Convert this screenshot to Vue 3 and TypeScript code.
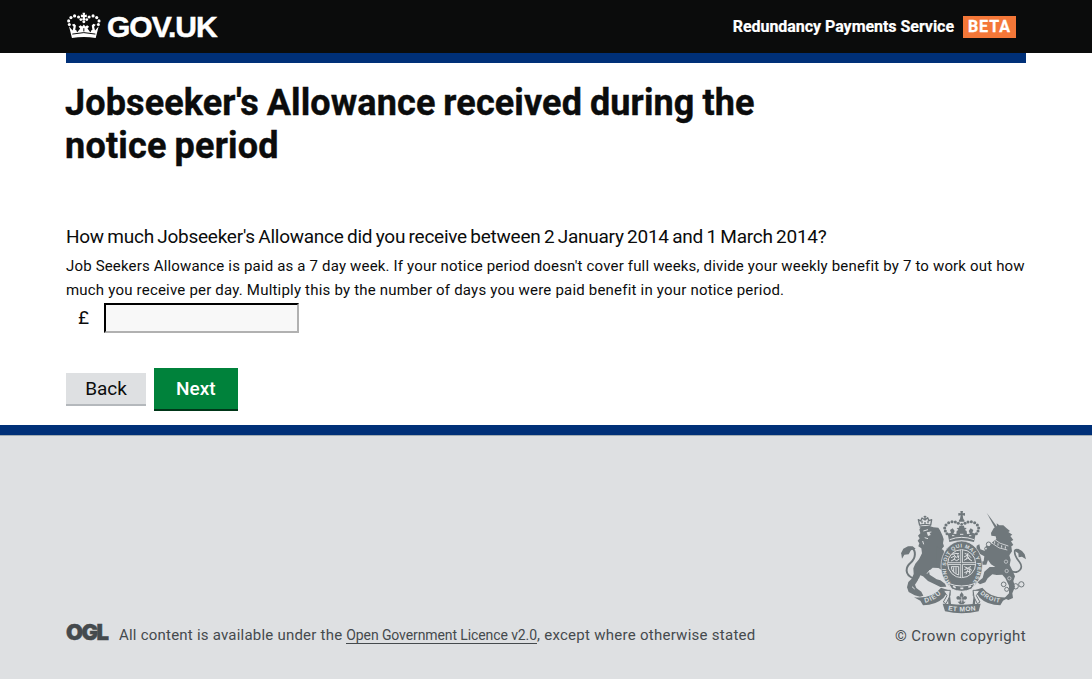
<script setup lang="ts">
import { ref } from 'vue'

const amount = ref<string>('')
const pearls: Array<[number, number, number]> = [
  [20, 49, 4.6], [18, 38, 4.6], [25, 28, 4.8], [36, 23, 4.8], [48, 26, 4.6], [55, 34, 4.2],
  [108, 49, 4.6], [110, 38, 4.6], [103, 28, 4.8], [92, 23, 4.8], [80, 26, 4.6], [73, 34, 4.2],
]
const arch: Array<[number, number]> = [
  [171, 101], [166, 93], [164, 84], [168, 75], [176, 68], [186, 65], [196, 66], [205, 70],
  [259, 101], [264, 93], [266, 84], [262, 75], [254, 68], [244, 65], [234, 66], [225, 70],
]
</script>

<template>
  <div class="page">
    <header class="top">
      <div class="wrap top-row">
        <a class="brand">
          <svg class="crown" viewBox="13 12 103 80" aria-hidden="true">
            <g fill="#fff">
              <circle v-for="(p, i) in pearls" :key="i" :cx="p[0]" :cy="p[1]" :r="p[2]" />
              <path d="M60 13h8l-1 7 6-1v8l-6-1 2 9q-5 4-10 0l2-9-6 1v-8l6 1z" />
              <circle cx="64" cy="41" r="4.5" />
              <path d="M19 54l11 13 3-11-5-6 7-3 5 5-2 13 8 5 7-9-5-5 6-5 5 4 5-6 5 6 5-4 6 5-5 5 7 9 8-5-2-13 5-5 7 3-5 6 3 11 11-13-9 36q-35-7-72 0z" />
            </g>
            <path d="M29 78q35-9 70 0M44 72l1-8M64 70v-10M84 72l-1-8" fill="none" stroke="#0b0c0c" stroke-width="3" />
          </svg>
          <span class="gov">GOV.UK</span>
        </a>
        <div class="service"><span class="service-name">Redundancy Payments Service</span><span class="beta">BETA</span></div>
      </div>
    </header>
    <main class="wrap main">
      <h1><span class="h-one">Jobseeker's Allowance received during the</span><br /><span class="h-two">notice period</span></h1>
      <form @submit.prevent>
        <label class="question" for="amount">How much Jobseeker's Allowance did you receive between 2 January 2014 and 1 March 2014?</label>
        <p class="hint"><span class="hint-one">Job Seekers Allowance is paid as a 7 day week. If your notice period doesn't cover full weeks, divide your weekly benefit by 7 to work out how</span><br /><span class="hint-two">much you receive per day. Multiply this by the number of days you were paid benefit in your notice period.</span></p>
        <div class="money"><span class="pound">£</span><input id="amount" v-model="amount" type="text" /></div>
        <div class="actions">
          <button class="back" type="button">Back</button>
          <button class="next" type="submit">Next</button>
        </div>
      </form>
    </main>
    <footer class="footer">
      <div class="wrap foot-row">
        <div class="licence">
          <span class="ogl">OGL</span>
          <p><span class="lic-a">All content is available under the </span><a>Open Government Licence v2.0</a><span class="lic-b">, except where otherwise stated</span></p>
        </div>
        <div class="copyright">
          <svg class="arms" viewBox="30 30 381 315" aria-hidden="true">
            <defs>
              <path id="motto" d="M182 247A47 61 0 1 1 248 247" />
              <path id="dieu" d="M105 308Q134 303 158 277" />
              <path id="mon" d="M174 331Q215 338 262 330" />
              <path id="droit" d="M270 280Q294 306 340 309" />
            </defs>
            <!-- lion -->
            <g fill="#6f777b" stroke="#6f777b" stroke-linejoin="round">
              <path stroke="none" d="M88 88L94 80 118 78 130 82 145 83 150 91 154 99 158 108 161 118 159 130 162 139 156 146 151 153 147 169 142 188 158 183 162 194 146 204 128 203 117 213 119 224 140 238 151 241 165 251 169 260 151 261 133 252 114 243 99 229 91 226 86 237 75 254 79 264 94 275 100 287 90 290 74 286 56 276 51 262 55 246 65 236 71 222 70 205 76 191 87 178 96 160 94 145 85 139 88 130 83 122 89 115 84 107 91 100z" />
              <path stroke="none" d="M140 140L160 150 166 165 160 182 164 205 158 212 140 200z" />
              <path fill="none" stroke-width="6" d="M70 235C43 224 46 201 62 188C79 174 77 151 67 145C54 139 46 151 43 160" />
              <path stroke="none" d="M33 160l7-14 14-7 14 0 9 7-14 5-7 12-13 1-7 12-2-13z" />
              <path fill="none" stroke-width="4" d="M89 76l-4-17 7 4 4-9 9 6 8-7 4 9 8-3-3 17M88 76q17-6 35 0M105 47v14M101 50h8M89 81l32-1M96 70v-8M114 70v-8M105 72v-6" />
            </g>
            <path d="M100 93l14-4M112 98l12-2M104 113l10 3M98 123l3 10M120 210l-9 11M83 251l4-15M66 260l8 7" fill="none" stroke="#dee0e2" stroke-width="3" />
            <path d="M110 97l8 0 4 8-8 3z" fill="#dee0e2" />
            <!-- unicorn -->
            <g fill="#6f777b">
              <path d="M290 38l30 41-5 5z" />
              <path d="M304 107L303 99 311 85 321 77 320 70 328 76 340 76 349 84 360 93 355 96 367 104 361 108 370 120 363 124 370 135 364 139 366 154 358 166 362 180 359 195 368 213 375 229 370 243 375 260 367 280 369 294 355 300 343 295 357 280 357 257 346 235 337 224 320 225 307 223 293 235 286 247 270 253 262 247 278 234 283 215 299 201 316 201 303 193 294 180 289 194 276 194 270 185 281 184 283 169 269 161 259 150 260 137 268 133 271 148 283 152 291 147 287 138 299 139 307 127 319 117 317 109z" />
              <path fill="none" stroke="#6f777b" stroke-width="5" d="M363 213C385 224 402 205 389 187C377 172 371 161 375 151Q384 143 399 165" />
              <path d="M371 151l13-5 12 7 8 10 4 15-12-8-10 2-1-12z" />
            </g>
            <path d="M304 128q22 20 48 22M309 115q20 18 46 23" fill="none" stroke="#dee0e2" stroke-width="2.5" />
            <path d="M314 124v7M324 130v7M335 136v7M346 139v7" fill="none" stroke="#dee0e2" stroke-width="3" />
            <g fill="none" stroke="#6f777b" stroke-width="3">
              <circle cx="296" cy="133" r="7" /><circle cx="289" cy="146" r="5" />
              <circle cx="341" cy="253" r="7" /><circle cx="350" cy="268" r="6" />
              <circle cx="377" cy="259" r="8" /><circle cx="394" cy="253" r="8" />
            </g>
            <g fill="none" stroke="#dee0e2" stroke-width="2"><circle cx="348" cy="185" r="5" /><circle cx="350" cy="213" r="5" /><circle cx="358" cy="235" r="5" /></g>
            <!-- crown -->
            <g fill="#6f777b">
              <circle v-for="(p, i) in arch" :key="i" :cx="p[0]" :cy="p[1]" r="4.6" />
              <path d="M211 33h8l-1 7 7-1v8l-7-1 2 11q5 3 3 8h-16q-2-5 3-8l2-11-7 1v-8l7 1z" />
              <circle cx="215" cy="73" r="4" /><circle cx="215" cy="82" r="4" />
              <path d="M173 101l10-3-3-8 8-5 6 8-4 8 9 1 1-9 5-3-5-6 7-1 1-6h14l1 6 7 1-5 6 5 3 1 9 9-1-4-8 6-8 8 5-3 8 10 3-5 25q-37-11-74 0z" />
            </g>
            <path d="M179 119q36-14 73 0M186 107h7m17-4h10m17 4h7" fill="none" stroke="#dee0e2" stroke-width="3" />
            <!-- garter and shield -->
            <ellipse cx="215" cy="198" rx="62" ry="75" fill="#6f777b" stroke="#dee0e2" stroke-width="2" />
            <circle cx="215" cy="191" r="42" fill="#6f777b" stroke="#dee0e2" stroke-width="3" />
            <text class="motto"><textPath href="#motto" textLength="262">HONI SOIT QUI MAL Y PENSE</textPath></text>
            <path d="M215 149v84M174 191h82" stroke="#dee0e2" stroke-width="8" />
            <path d="M215 149v84M174 191h82" stroke="#6f777b" stroke-width="3" />
            <g fill="none" stroke="#dee0e2" stroke-width="3">
              <path d="M185 164l9-4 13 1M183 173l11-5 5 4 9-4M183 183l10-5 7 4 8-5M191 162l5 8-5 10M203 163l3 12" />
              <path d="M224 160l12 5 7 8M222 171l9-5 10 15M222 181l11-7 13 9M234 159l-4 19" />
              <path d="M184 200h22M184 200q0 18 22 25M206 200v25M191 202v15M198 202v19" />
              <path d="M223 200l10 5 10-6M223 209l10-4 13 6M223 218l10-4 10 2M229 201l5 8-6 14M240 203l-2 18" />
            </g>
            <path d="M175 250q39 16 81 0l-11 17q-30 14-60 0z" fill="#6f777b" stroke="#dee0e2" stroke-width="3" />
            <path d="M189 259l8 4M211 265h9M235 262l8-4" stroke="#dee0e2" stroke-width="5" />
            <!-- motto ribbons -->
            <g fill="#6f777b">
              <path d="M72 292Q127 297 153 263L181 272 182 287 168 283 161 293Q138 315 99 316L91 302z" />
              <path d="M358 292Q303 297 277 263L249 272 248 287 262 283 269 293Q292 315 331 316L339 302z" />
              <path d="M158 311l17 1-1-23 6-3 3 26q32 5 65 0l3-26 6 3-2 23 17-1-6 23q-51 12-101 0z" />
              <path d="M160 271h21l-3 20-10 20-8-5 11-19z" fill="#dee0e2" stroke="#6f777b" stroke-width="3" />
              <path d="M270 271h-21l3 20 10 20 8-5-11-19z" fill="#dee0e2" stroke="#6f777b" stroke-width="3" />
              <path d="M215 276l6 9-3 10q4-11 12-5 4 9-9 10v5h6l-7 8h-10l-7-8h6v-5q-13-1-9-10 8-6 12 5l-3-10z" />
              <path d="M204 300h22M215 290v18" fill="none" stroke="#dee0e2" stroke-width="2" />
            </g>
            <text class="ribbon"><textPath href="#dieu" textLength="56">DIEU</textPath></text>
            <text class="ribbon"><textPath href="#mon" textLength="84">ET MON</textPath></text>
            <text class="ribbon droit"><textPath href="#droit" textLength="66">DROIT</textPath></text>
          </svg>
          <a class="crown-copy">© Crown copyright</a>
        </div>
      </div>
    </footer>
  </div>
</template>

<style>
body { margin: 0; background: #dee0e2; }
</style>

<style scoped>
.page { min-height: 679px; background: #fff; color: #0b0c0c; font-family: Roboto, "Noto Sans", sans-serif; display: flex; flex-direction: column; }
.wrap { width: 960px; margin: 0 auto; box-sizing: border-box; }
.top { background: #0b0c0c; height: 53px; color: #fff; }
.top-row { display: flex; justify-content: space-between; height: 53px; }
.brand { display: flex; align-items: flex-start; }
.crown { width: 34px; height: 27px; margin: 12px 0 0 1px; }
.gov { font: 700 30px/36px "Liberation Sans", Arial, sans-serif; letter-spacing: -1px; margin: 9px 0 0 6px; -webkit-text-stroke: 0.5px #fff; }
.service { display: flex; align-items: flex-start; padding: 16px 10px 0 0; }
.service-name { font-size: 16px; line-height: 21px; font-weight: 700; white-space: nowrap; letter-spacing: -0.04px; -webkit-text-stroke: 0.2px #fff; }
.beta { background: #f47738; height: 22px; width: 53px; margin-left: 9px; text-align: center; font-size: 16px; line-height: 21px; font-weight: 700; letter-spacing: 1px; -webkit-text-stroke: 0.3px #fff; }
.main { border-top: 10px solid #003078; height: 372px; }
h1 { margin: 19px 0 0 -1px; font-size: 36px; line-height: 43px; font-weight: 700; white-space: nowrap; -webkit-text-stroke: 0.4px #0b0c0c; }
.h-one { letter-spacing: 0.12px; word-spacing: -1.2px; }
.h-two { letter-spacing: 0.2px; word-spacing: -1.2px; }
.question { display: block; margin-top: 56px; font-size: 19px; line-height: 25px; white-space: nowrap; letter-spacing: -0.26px; word-spacing: -1px; }
.hint { margin: 5px 0 0; font-size: 15px; line-height: 24px; white-space: nowrap; }
.hint-one { letter-spacing: 0.17px; }
.hint-two { letter-spacing: 0.2px; }
.money { display: flex; margin-top: 1px; align-items: center; height: 30px; }
.pound { font-size: 19px; line-height: 29px; width: 38px; padding-left: 12px; box-sizing: border-box; align-self: flex-start; }
input { width: 195px; height: 30px; box-sizing: border-box; margin: 0; border: 2px solid #b1b1b1; border-top-color: #000; border-left-color: #000; background: #f8f8f8; padding: 3px; font: 19px Roboto, sans-serif; }
.actions { display: flex; align-items: flex-start; margin-top: 35px; }
button { border: 0; padding: 0; font-family: Roboto, sans-serif; font-size: 19px; }
.back { width: 80px; height: 31px; background: #dee0e2; box-shadow: 0 2px 0 #b4b8bc; margin: 5px 7.5px 0 0; color: #0b0c0c; }
.next { width: 84.5px; height: 41px; background: #00823b; color: #fff; box-shadow: 0 2px 0 #003618; font-weight: 500; outline: 0; }
.footer { flex: 1; background: #dee0e2; border-top: 10px solid #003078; box-shadow: inset 0 1px #a1acb2; color: #454a4d; }
.foot-row { display: flex; justify-content: space-between; }
.licence { display: flex; align-items: flex-start; padding-top: 187px; }
.licence p { margin: 2px 0 0; font-size: 15px; line-height: 22px; white-space: pre; }
.licence a { font-size: 14px; border-bottom: 1px solid #454a4d; letter-spacing: -0.1px; }
.lic-a { letter-spacing: 0.22px; }
.lic-b { letter-spacing: 0.27px; }
.ogl { font: 900 22px/21px Inter, sans-serif; letter-spacing: -1.6px; width: 53px; -webkit-text-stroke: 0.5px #454a4d; }
.copyright { display: flex; flex-direction: column; align-items: flex-end; padding-top: 75px; }
.arms { width: 127px; height: 105px; margin-right: -1px; }
.crown-copy { font-size: 15px; line-height: 22px; margin-top: 10px; white-space: nowrap; letter-spacing: 0.4px; }
.motto { font: 700 16px "Liberation Sans", sans-serif; fill: #dee0e2; }
.ribbon { font: 700 20px "Liberation Sans", sans-serif; fill: #dee0e2; }
.droit { font-size: 18px; }
</style>
